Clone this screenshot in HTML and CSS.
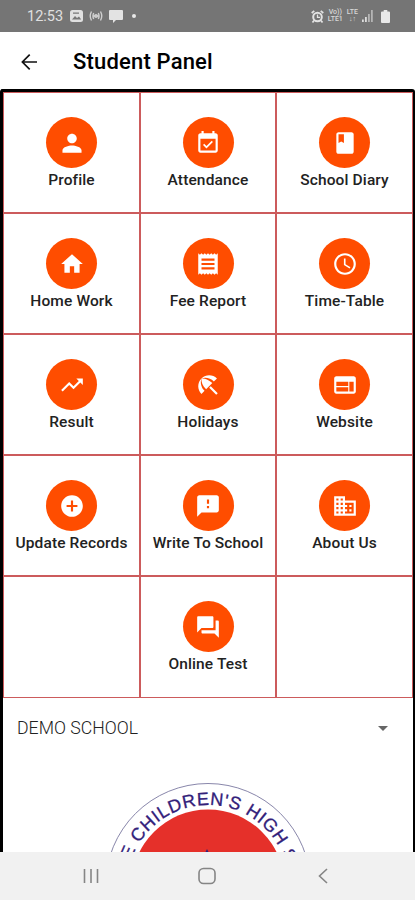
FILE: index.html
```html
<!DOCTYPE html>
<html lang="en">
<head>
    <meta charset="UTF-8" />
    <meta name="viewport" content="width=device-width, initial-scale=1.0" />
    <title>Student Panel</title>
    <link rel="stylesheet" href="styles.css">
</head>
<body>

    <div class="status-bar">
        <div class="status-left">
            <span class="time">12:53</span>
            <svg width="13" height="12" viewBox="0 0 13 12"><rect width="13" height="12" rx="2.5" fill="#e0e0e0"/><path d="M2 9.5l3-3.5 2 2 2-1.5 2.2 3zM3 2.5h6v1.2H3z" fill="#777"/></svg>
            <svg width="14" height="10" viewBox="0 0 14 10" fill="none" stroke="#d0d0d0" stroke-width="1.4"><path d="M2.5 .5Q0 5 2.5 9.5M4.7 2Q3.2 5 4.7 8M11.5 .5Q14 5 11.5 9.5M9.3 2Q10.8 5 9.3 8M4.7 5h4.6"/><circle cx="7" cy="5" r="1.3"/></svg>
            <svg width="14" height="13" viewBox="0 0 14 13" fill="#e3e3e3"><path d="M1 0h12q1 0 1 1v8q0 1-1 1H7l-3 3v-3H1q-1 0-1-1V1q0-1 1-1z"/></svg>
            <span class="dot"></span>
        </div>
        <div class="status-right">
            <svg width="13" height="13" viewBox="0 0 13 13" fill="none" stroke="#e3e3e3"><circle cx="6.5" cy="7" r="4.3" stroke-width="2"/><path d="M6.5 4.5V7.3H9" stroke-width="1.3"/><path d="M.7 3L3.3.8M12.3 3L9.7.8M3 10.5L1.5 12.5M10 10.5l1.5 2" stroke-width="1.7"/></svg>
            <span class="lte">Vo))<br>LTE1</span>
            <span class="lte">LTE<br>↓↑</span>
            <svg width="11" height="12" viewBox="0 0 11 12"><path d="M0 9.5h1.8V12H0zM3 7h1.8v5H3z" fill="#ddd"/><path d="M6 4h1.8v8H6zM9 0h1.8v12H9z" fill="#b5b5b5"/></svg>
            <svg class="battery" width="9" height="13" viewBox="0 0 9 13" fill="#e8e8e8"><path d="M2.7 0h3.6v1.5H8q1 0 1 1V12q0 1-1 1H1q-1 0-1-1V2.5q0-1 1-1h1.7z"/></svg>
        </div>
    </div>

    <header>
        <svg class="back" width="16" height="16" viewBox="4 4 16 16"><path d="M12.7 4.7L5.4 12l7.3 7.3M5.4 12H20"/></svg>
        <h1>Student Panel</h1>
    </header>

    <main>
        <div class="menu">
            <a class="item">
                <span class="icon"><svg viewBox="0 0 24 24"><path d="M12 12c2.210 0 4-1.790 4-4s-1.790-4-4-4-4 1.790-4 4 1.790 4 4 4zm0 2c-2.670 0-8 1.340-8 4v2h16v-2c0-2.660-5.330-4-8-4z" transform="translate(-1.2 -1) scale(1.1)"/></svg></span>
                <span class="label">Profile</span>
            </a>
            <a class="item">
                <span class="icon"><svg viewBox="0 0 24 24"><path d="M16.530 11.060L15.470 10l-4.880 4.880-2.120-2.120-1.060 1.060L10.590 17l5.940-5.940zM19 3h-1V1h-2v2H8V1H6v2H5c-1.110 0-1.990.9-1.990 2L3 19c0 1.100.89 2 2 2h14c1.100 0 2-.9 2-2V5c0-1.100-.9-2-2-2zm0 16H5V8h14v11z"/></svg></span>
                <span class="label">Attendance</span>
            </a>
            <a class="item">
                <span class="icon"><svg viewBox="0 0 24 24"><path d="M18 2H6c-1.100 0-2 .9-2 2v16c0 1.100.9 2 2 2h12c1.100 0 2-.9 2-2V4c0-1.100-.9-2-2-2zM6 4h5v8l-2.500-1.500L6 12V4z"/></svg></span>
                <span class="label">School Diary</span>
            </a>
            <a class="item">
                <span class="icon"><svg viewBox="0 0 24 24"><path d="M10 20v-6h4v6h5v-8h3L12 3 2 12h3v8z"/></svg></span>
                <span class="label">Home Work</span>
            </a>
            <a class="item">
                <span class="icon"><svg viewBox="0 0 24 24"><path d="M18 17H6v-2h12v2zm0-4H6v-2h12v2zm0-4H6V7h12v2zM3 22l1.500-1.500L6 22l1.500-1.500L9 22l1.500-1.500L12 22l1.500-1.500L15 22l1.500-1.500L18 22l1.500-1.500L21 22V2l-1.500 1.500L18 2l-1.500 1.500L15 2l-1.500 1.500L12 2l-1.500 1.500L9 2 7.500 3.500 6 2 4.500 3.500 3 2v20z"/></svg></span>
                <span class="label">Fee Report</span>
            </a>
            <a class="item">
                <span class="icon"><svg viewBox="0 0 24 24"><path d="M11.990 2C6.470 2 2 6.480 2 12s4.470 10 9.990 10C17.520 22 22 17.520 22 12S17.520 2 11.990 2zM12 20c-4.420 0-8-3.580-8-8s3.580-8 8-8 8 3.580 8 8-3.580 8-8 8zm.5-13H11v6l5.250 3.150.75-1.230-4.500-2.670z"/></svg></span>
                <span class="label">Time-Table</span>
            </a>
            <a class="item">
                <span class="icon"><svg viewBox="0 0 24 24"><path d="M16 6l2.290 2.290-4.880 4.880-4-4L2 16.590 3.410 18l6-6 4 4 6.300-6.290L22 12V6z"/></svg></span>
                <span class="label">Result</span>
            </a>
            <a class="item">
                <span class="icon"><svg viewBox="0 0 24 24"><path d="M13.127 14.560l1.430-1.430 6.440 6.443L19.570 21zm4.293-5.730l2.860-2.860c-3.950-3.950-10.350-3.960-14.300-.02 3.930-1.300 8.310-.25 11.440 2.880zM5.950 5.980c-3.940 3.950-3.930 10.350.02 14.300l2.860-2.860C5.700 14.290 4.650 9.910 5.950 5.980zm.02-.02l-.01.01c-.38 3.010 1.170 6.880 4.300 10.020l5.730-5.730c-3.130-3.130-7.010-4.680-10.020-4.300z"/></svg></span>
                <span class="label">Holidays</span>
            </a>
            <a class="item">
                <span class="icon"><svg viewBox="0 0 24 24"><path d="M20 4H4c-1.100 0-1.990.9-1.990 2L2 18c0 1.100.9 2 2 2h16c1.100 0 2-.9 2-2V6c0-1.100-.9-2-2-2zm-5 14H4v-4h11v4zm0-5H4V9h11v4zm5 5h-4V9h4v9z"/></svg></span>
                <span class="label">Website</span>
            </a>
            <a class="item">
                <span class="icon"><svg viewBox="0 0 24 24"><path d="M12 2C6.480 2 2 6.480 2 12s4.480 10 10 10 10-4.480 10-10S17.520 2 12 2zm5 11h-4v4h-2v-4H7v-2h4V7h2v4h4v2z"/></svg></span>
                <span class="label">Update Records</span>
            </a>
            <a class="item">
                <span class="icon"><svg viewBox="0 0 24 24"><path d="M20 2H4c-1.100 0-1.990.9-1.990 2L2 22l4-4h14c1.100 0 2-.9 2-2V4c0-1.100-.9-2-2-2zm-7 12h-2v-2h2v2zm0-4h-2V6h2v4z"/></svg></span>
                <span class="label">Write To School</span>
            </a>
            <a class="item">
                <span class="icon"><svg viewBox="0 0 24 24"><path d="M12 7V3H2v18h20V7H12zM6 19H4v-2h2v2zm0-4H4v-2h2v2zm0-4H4V9h2v2zm0-4H4V5h2v2zm4 12H8v-2h2v2zm0-4H8v-2h2v2zm0-4H8V9h2v2zm0-4H8V5h2v2zm10 12h-8v-2h2v-2h-2v-2h2v-2h-2V9h8v10zm-2-8h-2v2h2v-2zm0 4h-2v2h2v-2z"/></svg></span>
                <span class="label">About Us</span>
            </a>
            <div class="item"></div>
            <a class="item">
                <span class="icon"><svg viewBox="0 0 24 24"><path d="M21 6h-2v9H6v2c0 .55.45 1 1 1h11l4 4V7c0-.55-.45-1-1-1zm-4 6V3c0-.55-.45-1-1-1H3c-.55 0-1 .45-1 1v14l4-4h10c.55 0 1-.45 1-1z"/></svg></span>
                <span class="label">Online Test</span>
            </a>
            <div class="item"></div>
        </div>

        <div class="school-select">
            <span>DEMO SCHOOL</span>
            <svg width="10" height="5" viewBox="0 0 10 5"><path d="M0 0h10L5 5z" fill="#666"/></svg>
        </div>

        <!-- school emblem, lower half runs under the navigation bar -->
        <svg class="emblem" width="208" height="208" viewBox="-104 -104 208 208">
            <defs><path id="ring" d="M-81 0A81 81 0 0 1 81 0A81 81 0 0 1 -81 0"/></defs>
            <circle r="102.5" fill="#fff" stroke="#7a78a0" stroke-width=".9"/>
            <circle r="76.5" fill="#e5302a"/>
            <text><textPath href="#ring" startOffset="1">THE CHILDREN'S HIGH SCHOOL</textPath></text>
            <path d="M-3-33l2-4 2 4z" fill="#33217a"/>
        </svg>
    </main>

    <nav>
        <svg width="16" height="16" viewBox="0 0 16 16"><path d="M1.5 1v14M8 1v14M14.5 1v14"/></svg>
        <svg class="home" width="18" height="18" viewBox="0 0 18 18"><rect x="1" y="1.5" width="16" height="15" rx="4.5"/></svg>
        <svg width="10" height="16" viewBox="0 0 10 16"><path d="M9 1L1.5 8 9 15"/></svg>
    </nav>

</body>
</html>
```
FILE: styles.css
```css
* {
    box-sizing: border-box;
}

body {
    font-family: Roboto, "Liberation Sans", sans-serif;
    margin: 0;
    height: 900px;
    overflow: hidden;
    display: flex;
    flex-direction: column;
    background: #fff;
    color: #222;
}

svg {
    display: block;
    flex: none;
}

.status-bar {
    height: 32px;
    flex: none;
    background: #757575;
    color: #e0e0e0;
    padding: 0 25px 0 27px;
    display: flex;
    justify-content: space-between;
    align-items: center;
}

.status-left,
.status-right {
    display: flex;
    align-items: center;
    gap: 6px;
}

.time {
    font-size: 14.5px;
    width: 37px;
    padding-top: 1px;
}

.dot {
    width: 4px;
    height: 4px;
    margin-left: 3px;
    border-radius: 50%;
    background: #e8e8e8;
}

.status-right {
    gap: 4px;
}

.lte {
    font-size: 7px;
    line-height: 7px;
    font-weight: 500;
    text-align: center;
    color: #d8d8d8;
}

.battery {
    margin-left: 4px;
}

header {
    height: 57px;
    flex: none;
    display: flex;
    align-items: center;
    padding: 2px 21px 0;
}

.back {
    fill: none;
    stroke: #111;
    stroke-width: 1.7;
}

h1 {
    margin: 0 0 0 36px;
    font-size: 22px;
    font-weight: 500;
    letter-spacing: 0.18px;
    color: #000;
}

main {
    flex: 1;
    min-height: 0;
    overflow: hidden;
    border: solid #000;
    border-width: 3px 2px 0 3px;
    border-radius: 3px 3px 0 0;
    display: flex;
    flex-direction: column;
}

.menu {
    flex: none;
    display: grid;
    grid-template-columns: 137px 136px 137px;
    grid-template-rows: repeat(4, 121px) 122px;
}

.item {
    border: 1px solid #cc5b5c;
    padding-top: 24px;
    display: flex;
    flex-direction: column;
    align-items: center;
}

.icon {
    width: 51px;
    height: 51px;
    flex: none;
    border-radius: 50%;
    background: #ff4d00;
    display: flex;
    align-items: center;
    justify-content: center;
}

.icon svg {
    width: 26px;
    height: 26px;
    fill: #fff;
}

.label {
    margin-top: 1.5px;
    font-size: 15.5px;
    line-height: 20px;
    font-weight: 500;
    letter-spacing: 0.13px;
    white-space: nowrap;
}

.school-select {
    flex: none;
    height: 60px;
    padding: 0 25px 0 14px;
    display: flex;
    justify-content: space-between;
    align-items: center;
    font-size: 17.7px;
    font-weight: 300;
    color: #222;
}

.emblem {
    align-self: center;
    margin-top: 24px;
}

.emblem text {
    font-family: "Liberation Sans", Arial, sans-serif;
    font-size: 18px;
    letter-spacing: 0.7px;
    fill: #33217a;
    stroke: #33217a;
    stroke-width: 0.3px;
}

nav {
    height: 48px;
    flex: none;
    background: #f1f1f1;
    display: flex;
    justify-content: space-between;
    align-items: center;
    padding: 0 87px 0 83px;
}

nav svg {
    fill: none;
    stroke: #858585;
    stroke-width: 1.6;
}

nav .home {
    margin-right: 4px;
}
```
